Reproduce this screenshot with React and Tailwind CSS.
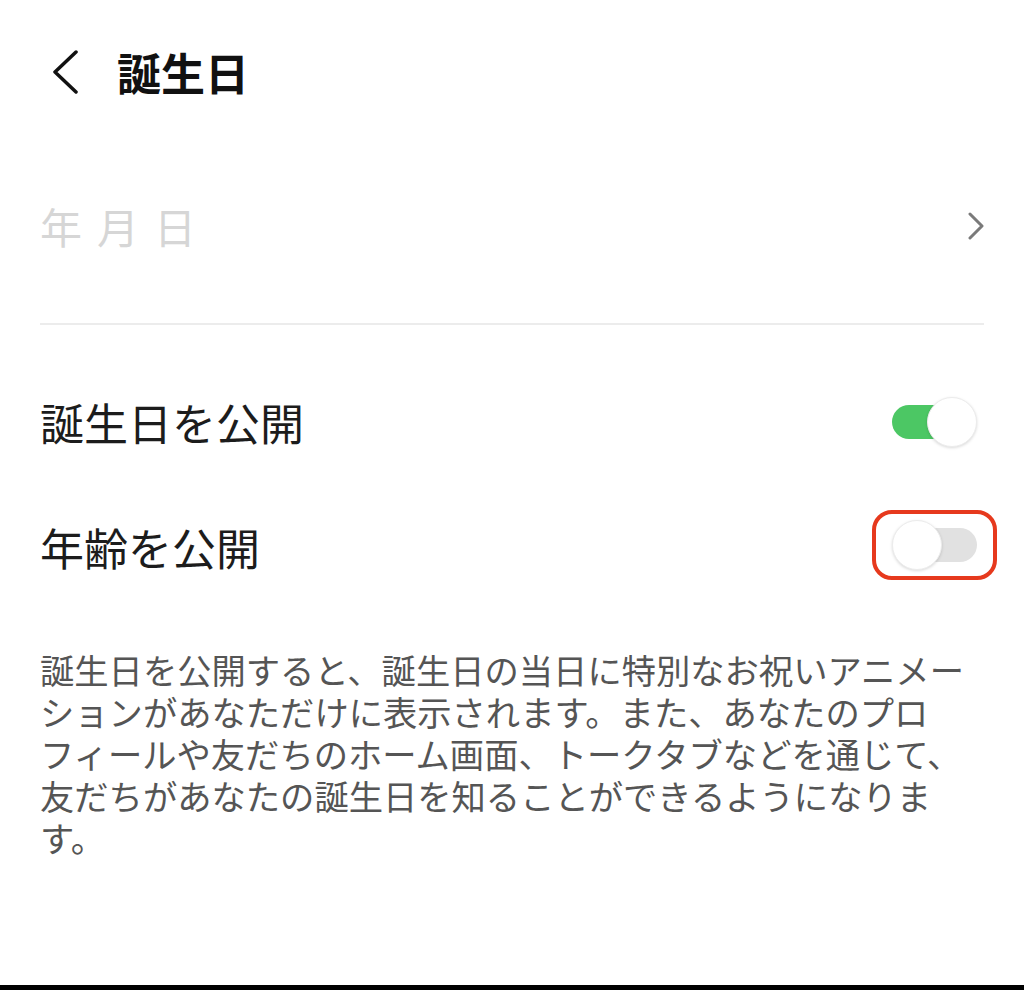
import React, { useState } from 'react';

const font = { fontFamily: '"Noto Sans CJK JP", "Noto Sans", sans-serif' };

const Toggle = ({ on, onChange }) => {
  if (on) {
    return (
      <button onClick={onChange} className="flex items-center w-[85px] h-[50px] cursor-pointer">
        <span className="w-[70px] h-[34px] rounded-full bg-[#4cc764]"></span>
        <span className="-ml-[35px] w-[50px] h-[50px] rounded-full bg-white border border-[#ececec] shadow-[0_1px_3px_rgba(0,0,0,0.15)]"></span>
      </button>
    );
  }
  return (
    <button onClick={onChange} className="flex items-center w-[85px] h-[50px] cursor-pointer">
      <span className="relative z-10 w-[50px] h-[50px] rounded-full bg-white border border-[#ececec] shadow-[0_1px_3px_rgba(0,0,0,0.15)]"></span>
      <span className="-ml-[35px] w-[70px] h-[34px] rounded-full bg-[#e1e1e1]"></span>
    </button>
  );
};

export default function App() {
  const [showBirthday, setShowBirthday] = useState(true);
  const [showAge, setShowAge] = useState(false);

  return (
    <div className="h-[990px] flex flex-col bg-white" style={font}>
      {/* Header */}
      <header className="h-[144px] flex items-center pl-[52px] gap-[39px]">
        <svg width="26" height="44" viewBox="0 0 26 44" fill="none">
          <path d="M24 2 L3 22 L24 42" stroke="#111" strokeWidth="3.5" strokeLinecap="round" strokeLinejoin="round" />
        </svg>
        <h1 className="text-[44px] font-bold text-[#111] leading-none">誕生日</h1>
      </header>

      {/* Date picker row */}
      <div className="h-[164px] flex items-center justify-between pl-[40px] pr-[40px]">
        <span className="text-[42px] leading-none tracking-[15px] text-[#d6d6d6]">年月日</span>
        <svg width="16" height="28" viewBox="0 0 16 28" fill="none">
          <path d="M2 2 L14 14 L2 26" stroke="#7a7a7a" strokeWidth="3" strokeLinecap="round" strokeLinejoin="round" />
        </svg>
      </div>

      <div className="mt-[15px] mx-[40px] h-[2px] bg-[#ececec]"></div>

      {/* Toggles */}
      <div className="mt-[62px] h-[70px] flex items-center justify-between pl-[40px] pr-[47px]">
        <span className="text-[44px] leading-none text-[#1c1c1c]">誕生日を公開</span>
        <Toggle on={showBirthday} onChange={() => setShowBirthday(!showBirthday)} />
      </div>

      <div className="mt-[53px] h-[70px] flex items-center justify-between pl-[40px] pr-[27px]">
        <span className="text-[44px] leading-none text-[#1c1c1c] pt-[4px]">年齢を公開</span>
        <div className="w-[125px] h-[70px] flex items-center justify-center rounded-[20px] border-[4px] border-[#e6391d]">
          <Toggle on={showAge} onChange={() => setShowAge(!showAge)} />
        </div>
      </div>

      {/* Description */}
      <p className="mt-[68px] px-[40px] text-[34.3px] leading-[42px] text-[#555]">
        誕生日を公開すると、誕生日の当日に特別なお祝いアニメー<br />
        ションがあなただけに表示されます。また、あなたのプロ<br />
        フィールや友だちのホーム画面、トークタブなどを通じて、<br />
        友だちがあなたの誕生日を知ることができるようになりま<br />
        す。
      </p>

      <div className="flex-1"></div>
      <div className="h-[5px] bg-black"></div>
    </div>
  );
}
